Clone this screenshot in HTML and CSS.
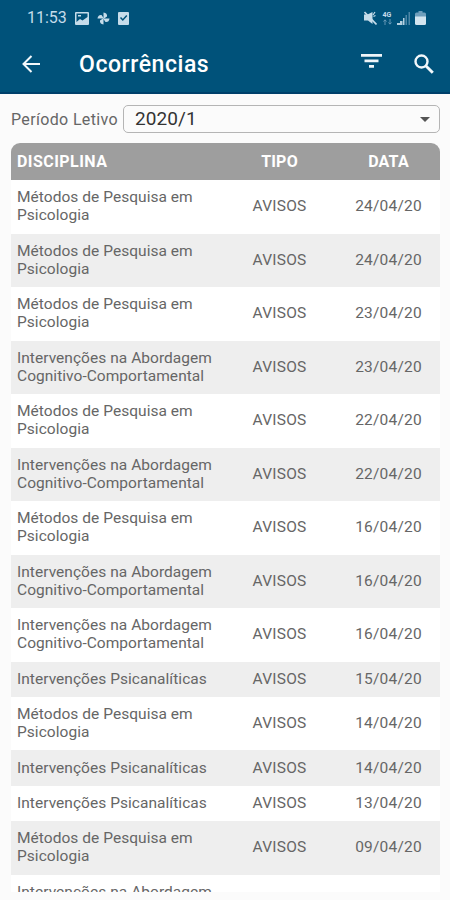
FILE: index.html
```html
<!DOCTYPE html>
<html lang="pt-BR">
<head>
<meta charset="UTF-8">
<title>Ocorrências</title>
<link rel="stylesheet" href="styles.css">
</head>
<body>
<header class="top">
    <div class="status">
        <span class="clock">11:53</span>
        <svg class="st-image" width="14" height="13" viewBox="0 0 14 13"><path fill="#c5dcea" fill-rule="evenodd" d="M1 0h12Q14 0 14 1v11Q14 13 13 13H1Q0 13 0 12V1Q0 0 1 0zM1.500 1.500v8.500l3.500-3 2.500 1.500L12.500 5V1.500z"/><path fill="#c5dcea" d="M3 3h3v1.500H3z"/></svg>
        <svg class="st-fan" width="13" height="13" viewBox="0 0 13 13"><g fill="#c5dcea"><path id="blade" d="M6.500 7V.5Q10.500 1 10 4.500L6.500 7z"/><use href="#blade" transform="rotate(90 6.500 6.500)"/><use href="#blade" transform="rotate(180 6.500 6.500)"/><use href="#blade" transform="rotate(270 6.500 6.500)"/></g></svg>
        <svg class="st-check" width="11" height="13" viewBox="0 0 11 13"><rect width="11" height="13" rx="1" fill="#c5dcea"/><path d="M2.500 5.500l2.300 2.500 4-4.500" fill="none" stroke="#00527a" stroke-width="1.500"/></svg>
        <div class="signals">
            <svg width="13" height="14" viewBox="0 0 13 14"><path fill="#c5dcea" d="M0 3.500h3.500L8.500 1v12L4 9.500H0z"/><path d="M9 4l2-3M9.500 5.500l2-1" stroke="#c5dcea" stroke-width="1.200"/><path d="M.5 1l12 12.500" stroke="#c5dcea" stroke-width="1.600"/></svg>
            <div class="net">
                <span>4G</span>
                <svg width="9" height="6" viewBox="0 0 9 6"><path d="M2 6V1M.5 2.500L2 .8l1.500 1.700M7 0v5M5.500 3.500L7 5.200l1.500-1.700" fill="none" stroke="#6f9fbc" stroke-width=".9"/></svg>
            </div>
            <svg width="13" height="13" viewBox="0 0 13 13"><path fill="#b5d0e0" d="M0 11h3v2H0zM3 9h2.500v4H3zM6 6h1.500v7H6z"/><path fill="#4d86a6" d="M8.500 3H10v10H8.500zM11.500 0H13v13h-1.500z"/></svg>
            <svg width="11" height="14" viewBox="0 0 11 14"><path fill="#6f9fbc" d="M3.500 0h4v1.500H9.500Q11 1.500 11 3v3H0V3q0-1.500 1.500-1.500h2z"/><path fill="#d3e5ef" d="M0 5.500h11v7q0 1.500-1.500 1.500h-8Q0 14 0 12.500z"/></svg>
        </div>
    </div>
    <div class="toolbar">
        <svg width="18" height="18" viewBox="0 0 18 18"><path d="M18 9H1.500M9.500 1L1.500 9l8 8" fill="none" stroke="#f2f8fb" stroke-width="2"/></svg>
        <h1>Ocorrências</h1>
        <svg class="filter" width="21" height="14" viewBox="0 0 21 14"><path fill="#eef5f9" d="M0 0h21v2.700H0zM3.500 5.500h14v2.700h-14zM8 11h5v2.700H8z"/></svg>
        <svg class="search" width="20" height="20" viewBox="0 0 20 20"><circle cx="7.500" cy="7.500" r="6" fill="none" stroke="#f2f8fb" stroke-width="2.400"/><path d="M12 12l6.800 6.800" stroke="#f2f8fb" stroke-width="2.900"/></svg>
    </div>
</header>
<main>
    <div class="period">
        <label>Período Letivo</label>
        <div class="select"><span>2020/1</span><i class="caret"></i></div>
    </div>
    <div class="table">
        <div class="row head"><span>DISCIPLINA</span><span>TIPO</span><span>DATA</span></div>
        <div class="row"><span>Métodos de Pesquisa em<br>Psicologia</span><span>AVISOS</span><span>24/04/20</span></div>
        <div class="row"><span>Métodos de Pesquisa em<br>Psicologia</span><span>AVISOS</span><span>24/04/20</span></div>
        <div class="row"><span>Métodos de Pesquisa em<br>Psicologia</span><span>AVISOS</span><span>23/04/20</span></div>
        <div class="row"><span>Intervenções na Abordagem<br>Cognitivo-Comportamental</span><span>AVISOS</span><span>23/04/20</span></div>
        <div class="row"><span>Métodos de Pesquisa em<br>Psicologia</span><span>AVISOS</span><span>22/04/20</span></div>
        <div class="row"><span>Intervenções na Abordagem<br>Cognitivo-Comportamental</span><span>AVISOS</span><span>22/04/20</span></div>
        <div class="row"><span>Métodos de Pesquisa em<br>Psicologia</span><span>AVISOS</span><span>16/04/20</span></div>
        <div class="row"><span>Intervenções na Abordagem<br>Cognitivo-Comportamental</span><span>AVISOS</span><span>16/04/20</span></div>
        <div class="row"><span>Intervenções na Abordagem<br>Cognitivo-Comportamental</span><span>AVISOS</span><span>16/04/20</span></div>
        <div class="row"><span>Intervenções Psicanalíticas</span><span>AVISOS</span><span>15/04/20</span></div>
        <div class="row"><span>Métodos de Pesquisa em<br>Psicologia</span><span>AVISOS</span><span>14/04/20</span></div>
        <div class="row"><span>Intervenções Psicanalíticas</span><span>AVISOS</span><span>14/04/20</span></div>
        <div class="row"><span>Intervenções Psicanalíticas</span><span>AVISOS</span><span>13/04/20</span></div>
        <div class="row"><span>Métodos de Pesquisa em<br>Psicologia</span><span>AVISOS</span><span>09/04/20</span></div>
        <div class="row last"><span>Intervenções na Abordagem</span></div>
    </div>
</main>
</body>
</html>
```

FILE: styles.css
```css
* {
    box-sizing: border-box;
}
body {
    margin: 0;
    height: 900px;
    overflow: hidden;
    background-color: #fbfbfb;
    font-family: Roboto, sans-serif;
    color: #666;
}
svg {
    display: block;
    flex: none;
}
.top {
    height: 94px;
    background-color: #00527a;
    border-bottom: 2px solid #00406b;
}
.status {
    display: flex;
    align-items: center;
    height: 36px;
    padding: 0 24px 0 27px;
}
.clock {
    width: 48px;
    font-size: 16px;
    line-height: 36px;
    color: #c5dcea;
}
.st-fan {
    margin-left: 8px;
}
.st-check {
    margin-left: 8px;
}
.signals {
    display: flex;
    align-items: center;
    gap: 5px;
    margin-left: auto;
}
.net {
    display: flex;
    flex-direction: column;
    align-items: center;
    width: 10px;
    font-size: 7px;
    font-weight: bold;
    line-height: 7px;
    color: #c5dcea;
}
.toolbar {
    display: flex;
    align-items: center;
    height: 56px;
    padding: 0 16px 0 22px;
}
h1 {
    flex: 1;
    margin: 0 0 0 39px;
    font-size: 23px;
    font-weight: 500;
    letter-spacing: 0.55px;
    color: #fff;
}
.filter {
    margin: 0 32px 7px 0;
}
main {
    padding: 11px 10px 0 11px;
}
.period {
    display: flex;
    align-items: center;
    justify-content: space-between;
    height: 28px;
}
.period label {
    font-size: 16px;
    letter-spacing: 0.35px;
}
.select {
    display: flex;
    align-items: center;
    justify-content: space-between;
    width: 317px;
    height: 28px;
    padding: 0 9px 2px 11px;
    border: 1px solid #b5b5b5;
    border-radius: 5px;
    font-size: 19px;
    letter-spacing: 0.1px;
    color: #333;
}
.caret {
    margin-top: 2px;
    border: 5px solid transparent;
    border-top-color: #555;
    border-bottom: 0;
}
.table {
    height: 749px;
    margin-top: 10px;
    border-radius: 9px 9px 0 0;
    overflow: hidden;
    background-color: #fff;
}
.row {
    display: grid;
    grid-template-columns: 211px 115px 103px;
    align-items: center;
    padding: 8.2px 0 9px;
    font-size: 15.5px;
    line-height: 18.15px;
    letter-spacing: 0.2px;
    white-space: nowrap;
    text-align: center;
}
.row span:first-child {
    padding-left: 6px;
    letter-spacing: 0.04px;
    text-align: left;
}
.row:nth-child(odd) {
    background-color: #eee;
}
.row.head {
    height: 37px;
    padding: 1px 0 0;
    background-color: #9e9e9e;
    font-size: 16px;
    font-weight: bold;
    color: #fff;
}
.row.head span:first-child {
    letter-spacing: 0.45px;
}
.row.last {
    background-color: #fff;
}
```
